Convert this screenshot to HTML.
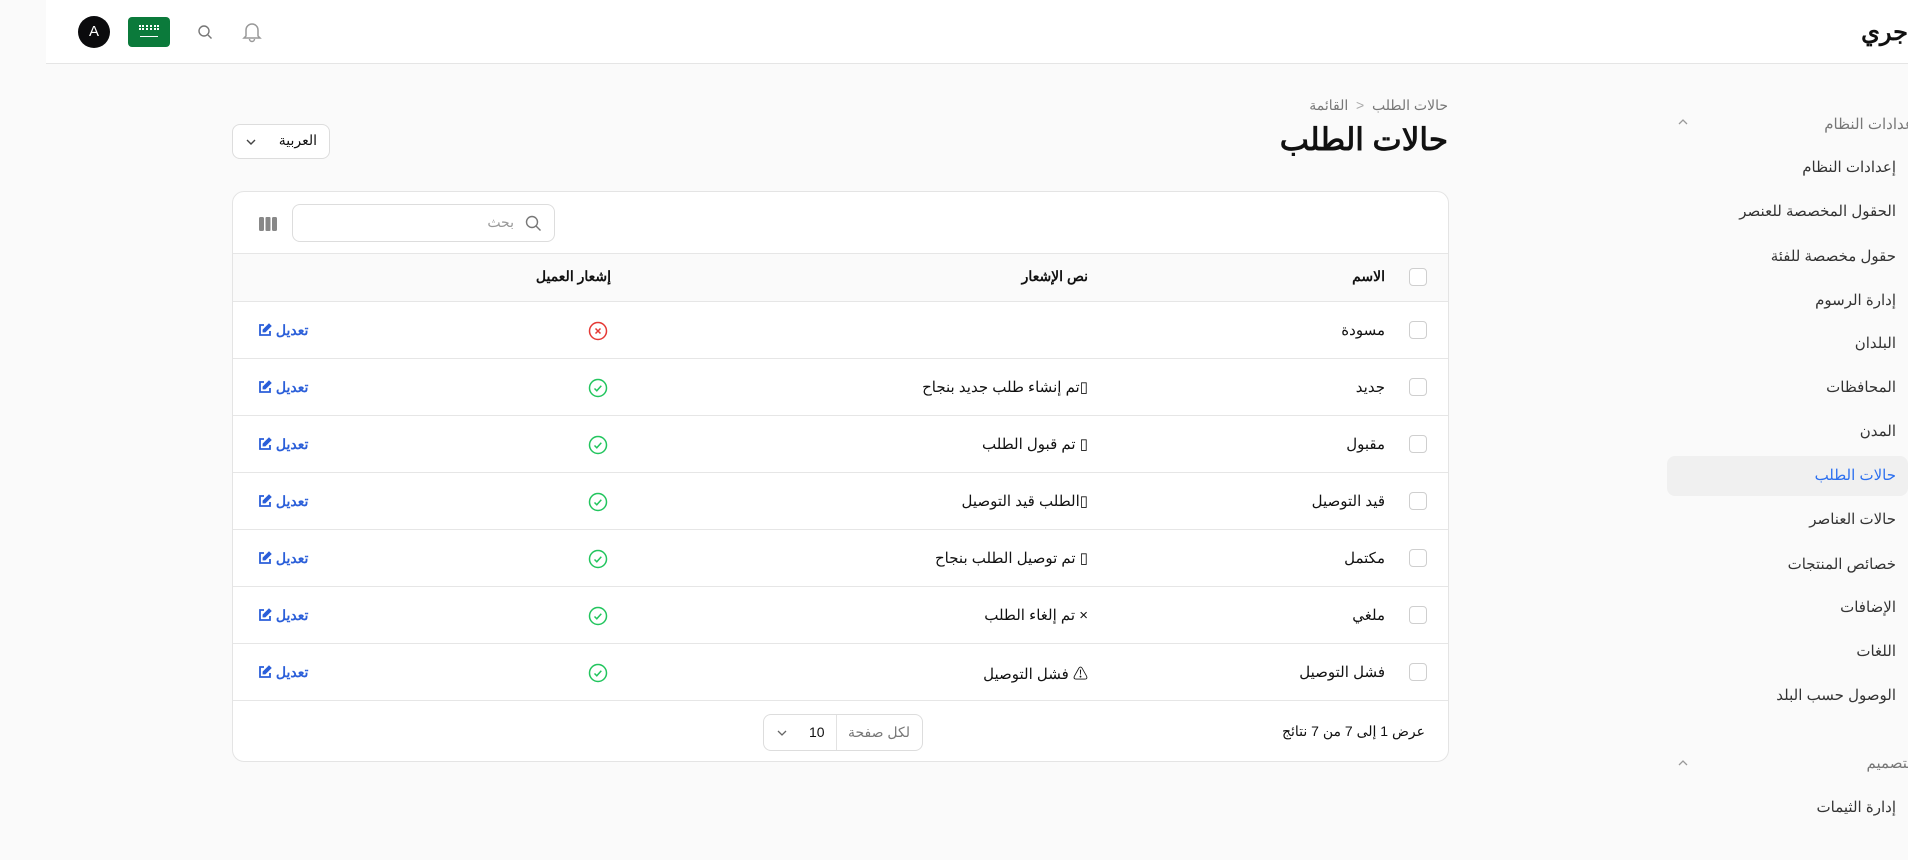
<!DOCTYPE html>
<html><head><meta charset="utf-8"><style>
*{box-sizing:border-box;margin:0;padding:0}
body{width:1908px;height:860px;background:#fafafa;font-family:"Liberation Sans","Noto Sans CJK SC",sans-serif;color:#111;position:relative;overflow:hidden}
.a{position:absolute}
.hdr{left:46px;top:0;width:1862px;height:64px;background:#fff;border-bottom:1px solid #e5e5e5}
.side{right:12px;font-size:15px;color:#333;text-align:right;white-space:nowrap;direction:rtl}
.card{left:232px;top:191px;width:1217px;height:571px;background:#fff;border:1px solid #e4e4e4;border-radius:12px;overflow:hidden}
.rowline{left:0;width:100%;height:1px;background:#e6e6e6}
.cb{width:18px;height:18px;border:1px solid #cfcfcf;border-radius:4px;background:#fff}
.t{direction:rtl;white-space:nowrap;font-size:15px}
.edit{color:#2b5fd9;font-weight:bold;font-size:14px;direction:rtl}
.edit svg{vertical-align:-2px}
</style></head><body>
<div class="a hdr"></div>
<div class="a" style="left:78px;top:16px;width:32px;height:32px;border-radius:50%;background:#0b0b0d;color:#fff;font-size:15px;text-align:center;line-height:32px">A</div>
<div class="a" style="left:128px;top:17px;width:42px;height:30px;border-radius:4px;background:#0b7a3b"><div class="a" style="left:11px;top:8px;width:20px;height:5px;border-top:2px dotted #fff;border-bottom:2px dotted #fff"></div><div class="a" style="left:12px;top:19px;width:18px;height:1px;background:#fff"></div></div>
<svg class="a" style="left:197px;top:24px" width="16" height="16" viewBox="0 0 16 16" fill="none" stroke="#777" stroke-width="1.4"><circle cx="7" cy="7" r="5"/><path d="M11 11l3.5 3.5"/></svg>
<svg class="a" style="left:241px;top:20px" width="22" height="24" viewBox="0 0 22 24" fill="none" stroke="#999" stroke-width="1.5"><path d="M5 16V10a6 6 0 0112 0v6l2 2H3z"/><path d="M8.5 19a2.5 2.5 0 005 0"/></svg>
<div class="a t" style="right:0;top:18px;font-size:24px;font-weight:bold">جري</div>

<div class="a" style="left:1667px;top:456px;width:241px;height:40px;background:#f0f0f0;border-radius:8px"></div>
<svg class="a" style="left:1677px;top:117px" width="12" height="10" viewBox="0 0 12 10" fill="none" stroke="#999" stroke-width="1.3"><path d="M2 7l4-4 4 4"/></svg>
<div class="a side" style="top:115px;right:-10px;color:#777">إعدادات النظام</div>
<div class="a side" style="top:158px">إعدادات النظام</div>
<div class="a side" style="top:202px">الحقول المخصصة للعنصر</div>
<div class="a side" style="top:247px">حقول مخصصة للفئة</div>
<div class="a side" style="top:291px">إدارة الرسوم</div>
<div class="a side" style="top:334px">البلدان</div>
<div class="a side" style="top:378px">المحافظات</div>
<div class="a side" style="top:422px">المدن</div>
<div class="a side" style="top:466px;color:#2b6ff0">حالات الطلب</div>
<div class="a side" style="top:510px">حالات العناصر</div>
<div class="a side" style="top:555px">خصائص المنتجات</div>
<div class="a side" style="top:598px">الإضافات</div>
<div class="a side" style="top:642px">اللغات</div>
<div class="a side" style="top:686px">الوصول حسب البلد</div>
<svg class="a" style="left:1677px;top:758px" width="12" height="10" viewBox="0 0 12 10" fill="none" stroke="#999" stroke-width="1.3"><path d="M2 7l4-4 4 4"/></svg>
<div class="a side" style="top:754px;right:-8px;color:#777">التصميم</div>
<div class="a side" style="top:798px">إدارة الثيمات</div>

<div class="a t" style="right:460px;top:97px;font-size:14px;color:#777">حالات الطلب &nbsp;<span style="color:#aaa">&lt;</span>&nbsp; القائمة</div>
<div class="a t" style="right:460px;top:122px;font-size:31px;font-weight:bold">حالات الطلب</div>
<div class="a" style="left:232px;top:124px;width:98px;height:35px;background:#fff;border:1px solid #ddd;border-radius:8px"><svg class="a" style="left:12px;top:13px" width="12" height="8" viewBox="0 0 12 8" fill="none" stroke="#444" stroke-width="1.4"><path d="M2 2l4 4 4-4"/></svg><div class="a t" style="right:12px;top:7px;font-size:14px">العربية</div></div>

<div class="a card">
 <svg class="a" style="left:26px;top:24px" width="18" height="16" viewBox="0 0 18 16" fill="#888"><rect x="0" y="1" width="5" height="14" rx="1.5"/><rect x="6.5" y="1" width="5" height="14" rx="1"/><rect x="13" y="1" width="5" height="14" rx="1.5"/></svg>
 <div class="a" style="left:59px;top:12px;width:263px;height:38px;border:1px solid #ddd;border-radius:8px"><svg class="a" style="right:12px;top:10px" width="17" height="17" viewBox="0 0 17 17" fill="none" stroke="#777" stroke-width="1.4"><circle cx="7" cy="7" r="5.5"/><path d="M11 11l4.5 4.5"/></svg><div class="a t" style="right:40px;top:9px;color:#999;font-size:14px">بحث</div></div>
 <div class="a" style="left:0;top:61px;width:100%;height:49px;background:#fafafa;border-top:1px solid #e6e6e6;border-bottom:1px solid #e6e6e6"></div>
 <div class="a cb" style="left:1176px;top:76px"></div>
 <div class="a t" style="right:63px;top:76px;font-weight:bold;font-size:14px">الاسم</div>
 <div class="a t" style="right:360px;top:76px;font-weight:bold;font-size:14px">نص الإشعار</div>
 <div class="a t" style="right:837px;top:76px;font-weight:bold;font-size:14px">إشعار العميل</div>
 <div class="a rowline" style="top:166px"></div>
 <div class="a rowline" style="top:223px"></div>
 <div class="a rowline" style="top:280px"></div>
 <div class="a rowline" style="top:337px"></div>
 <div class="a rowline" style="top:394px"></div>
 <div class="a rowline" style="top:451px"></div>
 <div class="a rowline" style="top:508px"></div>

 <div class="a cb" style="left:1176px;top:129px"></div><div class="a t" style="right:63px;top:129px">مسودة</div>
 <svg class="a" style="left:355px;top:129px" width="20" height="20" viewBox="0 0 20 20" fill="none" stroke="#e53935" stroke-width="1.5"><circle cx="10" cy="10" r="8.5"/><path d="M7.5 7.5l5 5M12.5 7.5l-5 5"/></svg>

 <div class="a cb" style="left:1176px;top:186px"></div><div class="a t" style="right:63px;top:186px">جديد</div><div class="a t" style="right:360px;top:186px">▯تم إنشاء طلب جديد بنجاح</div>
 <div class="a cb" style="left:1176px;top:243px"></div><div class="a t" style="right:63px;top:243px">مقبول</div><div class="a t" style="right:360px;top:243px">▯ تم قبول الطلب</div>
 <div class="a cb" style="left:1176px;top:300px"></div><div class="a t" style="right:63px;top:300px">قيد التوصيل</div><div class="a t" style="right:360px;top:300px">▯الطلب قيد التوصيل</div>
 <div class="a cb" style="left:1176px;top:357px"></div><div class="a t" style="right:63px;top:357px">مكتمل</div><div class="a t" style="right:360px;top:357px">▯ تم توصيل الطلب بنجاح</div>
 <div class="a cb" style="left:1176px;top:414px"></div><div class="a t" style="right:63px;top:414px">ملغي</div><div class="a t" style="right:360px;top:414px">× تم إلغاء الطلب</div>
 <div class="a cb" style="left:1176px;top:471px"></div><div class="a t" style="right:63px;top:471px">فشل التوصيل</div><div class="a t" style="right:360px;top:471px">⚠ فشل التوصيل</div>

 <svg class="a" style="left:355px;top:186px" width="20" height="20" viewBox="0 0 20 20" fill="none" stroke="#22c55e" stroke-width="1.5"><circle cx="10" cy="10" r="8.5"/><path d="M6.5 10.5l2.3 2.3 4.5-5"/></svg>
 <svg class="a" style="left:355px;top:243px" width="20" height="20" viewBox="0 0 20 20" fill="none" stroke="#22c55e" stroke-width="1.5"><circle cx="10" cy="10" r="8.5"/><path d="M6.5 10.5l2.3 2.3 4.5-5"/></svg>
 <svg class="a" style="left:355px;top:300px" width="20" height="20" viewBox="0 0 20 20" fill="none" stroke="#22c55e" stroke-width="1.5"><circle cx="10" cy="10" r="8.5"/><path d="M6.5 10.5l2.3 2.3 4.5-5"/></svg>
 <svg class="a" style="left:355px;top:357px" width="20" height="20" viewBox="0 0 20 20" fill="none" stroke="#22c55e" stroke-width="1.5"><circle cx="10" cy="10" r="8.5"/><path d="M6.5 10.5l2.3 2.3 4.5-5"/></svg>
 <svg class="a" style="left:355px;top:414px" width="20" height="20" viewBox="0 0 20 20" fill="none" stroke="#22c55e" stroke-width="1.5"><circle cx="10" cy="10" r="8.5"/><path d="M6.5 10.5l2.3 2.3 4.5-5"/></svg>
 <svg class="a" style="left:355px;top:471px" width="20" height="20" viewBox="0 0 20 20" fill="none" stroke="#22c55e" stroke-width="1.5"><circle cx="10" cy="10" r="8.5"/><path d="M6.5 10.5l2.3 2.3 4.5-5"/></svg>

 <div class="a" style="left:25px;top:130px;width:80px;height:400px">
  <div class="a edit" style="left:0;top:0">تعديل <svg width="14" height="14" viewBox="0 0 14 14" fill="none" stroke="#2b5fd9" stroke-width="1.8"><path d="M6 2H2v10h10V8"/><path d="M11 1.5l1.5 1.5L7 8.5H5.5V7z" fill="#2b5fd9"/></svg></div>
  <div class="a edit" style="left:0;top:57px">تعديل <svg width="14" height="14" viewBox="0 0 14 14" fill="none" stroke="#2b5fd9" stroke-width="1.8"><path d="M6 2H2v10h10V8"/><path d="M11 1.5l1.5 1.5L7 8.5H5.5V7z" fill="#2b5fd9"/></svg></div>
  <div class="a edit" style="left:0;top:114px">تعديل <svg width="14" height="14" viewBox="0 0 14 14" fill="none" stroke="#2b5fd9" stroke-width="1.8"><path d="M6 2H2v10h10V8"/><path d="M11 1.5l1.5 1.5L7 8.5H5.5V7z" fill="#2b5fd9"/></svg></div>
  <div class="a edit" style="left:0;top:171px">تعديل <svg width="14" height="14" viewBox="0 0 14 14" fill="none" stroke="#2b5fd9" stroke-width="1.8"><path d="M6 2H2v10h10V8"/><path d="M11 1.5l1.5 1.5L7 8.5H5.5V7z" fill="#2b5fd9"/></svg></div>
  <div class="a edit" style="left:0;top:228px">تعديل <svg width="14" height="14" viewBox="0 0 14 14" fill="none" stroke="#2b5fd9" stroke-width="1.8"><path d="M6 2H2v10h10V8"/><path d="M11 1.5l1.5 1.5L7 8.5H5.5V7z" fill="#2b5fd9"/></svg></div>
  <div class="a edit" style="left:0;top:285px">تعديل <svg width="14" height="14" viewBox="0 0 14 14" fill="none" stroke="#2b5fd9" stroke-width="1.8"><path d="M6 2H2v10h10V8"/><path d="M11 1.5l1.5 1.5L7 8.5H5.5V7z" fill="#2b5fd9"/></svg></div>
  <div class="a edit" style="left:0;top:342px">تعديل <svg width="14" height="14" viewBox="0 0 14 14" fill="none" stroke="#2b5fd9" stroke-width="1.8"><path d="M6 2H2v10h10V8"/><path d="M11 1.5l1.5 1.5L7 8.5H5.5V7z" fill="#2b5fd9"/></svg></div>
 </div>

 <div class="a t" style="right:23px;top:531px;font-size:14px">عرض 1 إلى 7 من 7 نتائج</div>
 <div class="a" style="left:530px;top:522px;width:160px;height:37px;border:1px solid #ddd;border-radius:8px">
  <div class="a" style="left:72px;top:0;width:1px;height:35px;background:#e2e2e2"></div>
  <svg class="a" style="left:12px;top:14px" width="12" height="8" viewBox="0 0 12 8" fill="none" stroke="#666" stroke-width="1.3"><path d="M2 2l4 4 4-4"/></svg>
  <div class="a" style="left:45px;top:9px;font-size:14px">10</div>
  <div class="a t" style="right:12px;top:9px;font-size:14px;color:#777">لكل صفحة</div>
 </div>
</div>
</body></html>
